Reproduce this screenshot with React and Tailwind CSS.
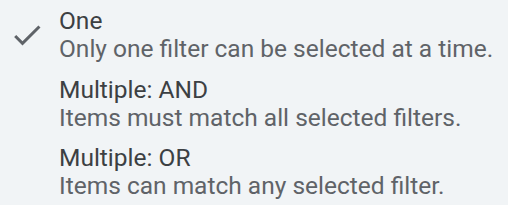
import React from "react";

const OPTIONS = [
  { title: "One", description: "Only one filter can be selected at a time.", selected: true },
  { title: "Multiple: AND", description: "Items must match all selected filters." },
  { title: "Multiple: OR", description: "Items can match any selected filter." },
];

function CheckIcon() {
  return (
    <svg viewBox="0 0 24 24" className="w-[36px] h-[36px] fill-[#5f6368]">
      <path d="M9 16.17 4.83 12l-1.42 1.41L9 19 21 7l-1.41-1.41z" />
    </svg>
  );
}

export default function App() {
  return (
    <div
      className="w-[508px] h-[205px] bg-[#f1f4f6] pt-[7px] flex flex-col gap-[12.5px]"
      style={{ fontFamily: "Roboto, 'Noto Sans', sans-serif" }}
    >
      {OPTIONS.map((o) => (
        <div key={o.title} className="flex items-center">
          <div className="w-[59px] pl-[9px] flex items-center">
            {o.selected && <CheckIcon />}
          </div>
          <div className="text-[24.5px] leading-[28px]">
            <div className="text-[#3c4043]">{o.title}</div>
            <div className="text-[#5f6368]">{o.description}</div>
          </div>
        </div>
      ))}
    </div>
  );
}
